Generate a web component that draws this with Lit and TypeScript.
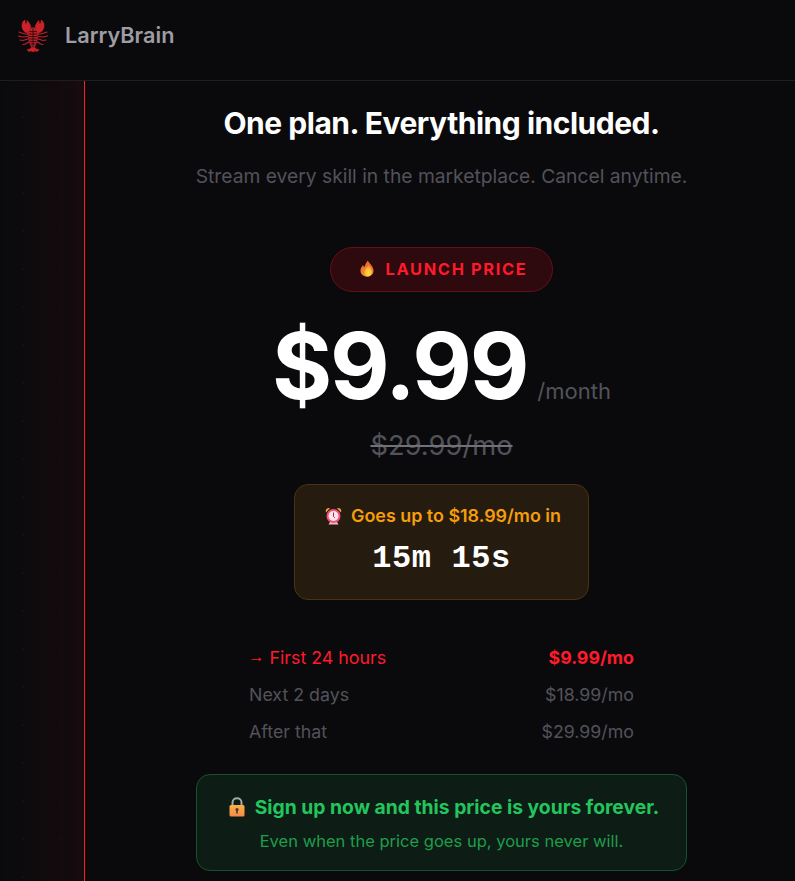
import { LitElement, html, css } from "lit";
import { customElement } from "lit/decorators.js";

@customElement("app-root")
export class AppRoot extends LitElement {
  static styles = css`
    :host { display: block; width: 795px; height: 881px; overflow: hidden; background: #0a0a0c; font-family: Inter, "Noto Sans", sans-serif; color: #fff; }
    .head { height: 80px; border-bottom: 1px solid #1e1e22; display: flex; align-items: center; padding-left: 17px; gap: 16px; }
    .logo { width: 32px; height: 34px; margin-top: -10px; flex: none; }
    .brand { font-size: 21.7px; font-weight: 600; color: #9d9da3; margin-top: -10px; }
    .body { display: flex; height: 800px; }
    .side { width: 84px; flex: none; border-right: 1px solid #ff1a2b; background-color: #0a0a0c; background-image: radial-gradient(circle, #111114 0.8px, transparent 1.2px), linear-gradient(90deg, rgba(255, 26, 43, 0) 0%, rgba(255, 26, 43, 0.02) 50%, rgba(255, 26, 43, 0.055) 100%); background-size: 38px 38px, 100% 100%; background-position: 4px 17px, 0 0; }
    .main { flex: 1; display: flex; flex-direction: column; align-items: center; padding-left: 3px; }
    h1 { margin: 22px 0 0; font-size: 30px; line-height: 40px; font-weight: 700; letter-spacing: -0.48px; color: #fff; }
    .sub { margin-top: 19px; font-size: 19.25px; line-height: 28px; color: #52525b; }
    .pill { margin-top: 57px; height: 45px; width: 223px; box-sizing: border-box; border: 1px solid #64101a; border-radius: 23px; background: #2e090e; display: flex; align-items: center; justify-content: center; gap: 12px; padding: 0 0 2px 4px; font-size: 16.4px; font-weight: 700; letter-spacing: 1.65px; color: #ff1a2b; }
    .price { display: flex; align-items: baseline; margin-top: 14px; height: 120px; gap: 10px; }
    .amount { font-size: 92px; line-height: 120px; font-weight: 700; letter-spacing: -2.2px; color: #fff; }
    .per { font-size: 22px; color: #52525b; }
    .old { font-size: 27.3px; line-height: 36px; margin-top: 2px; color: #52525b; text-decoration: line-through; text-decoration-color: #71717a; }
    .timer { margin-top: 20px; width: 295px; height: 116px; box-sizing: border-box; border: 1px solid #4a3312; border-radius: 14px; background: #261b0f; display: flex; flex-direction: column; align-items: center; padding: 19px 0 0 3px; }
    .t1 { font-size: 17.9px; line-height: 24px; font-weight: 600; color: #f59e0b; display: flex; gap: 9px; align-items: center; }
    .t2 { margin: 11px 0 0 -3px; font-family: "Liberation Mono", monospace; font-size: 32px; line-height: 40px; font-weight: 700; color: #fff; letter-spacing: 0.6px; }
    .tiers { margin-top: 46px; width: 385px; display: flex; flex-direction: column; gap: 13px; }
    .row { display: flex; justify-content: space-between; font-size: 17.8px; line-height: 24px; color: #52525b; }
    .row.on { color: #ff1a2b; }
    .row.on b { font-weight: 700; }
    .arrow { font-family: "Liberation Sans", sans-serif; font-size: 16.5px; display: inline-block; transform: translateY(-2px); margin-left: -1px; }
    .lock { margin-top: 30px; width: 491px; height: 97px; box-sizing: border-box; border: 1px solid #14532d; border-radius: 14px; background: #0d1c14; display: flex; flex-direction: column; align-items: center; padding-top: 19px; }
    .l1 { font-size: 19.3px; line-height: 26px; font-weight: 700; color: #22c55e; display: flex; gap: 9px; align-items: center; padding-left: 4px; }
    .l2 { margin-top: 10px; font-size: 16.55px; line-height: 22px; color: #1f9d4d; }
    .ico { flex: none; display: block; }
  `;

  render() {
    return html`
      <div class="head">
        <svg class="logo" viewBox="15 18 32 34" fill="none" stroke="#c2222a" stroke-linecap="round">
          <defs>
            <g id="half">
              <path d="M25.500 33 C21 32 19.500 28 20 24.500 C20.300 22 21.500 20.500 23 20 C22.800 22 23.300 23.500 24.300 24 C24.800 23 25 21.500 25 20.500 C27.500 22 28.500 26 28 29 C27.700 31 26.800 32.500 25.500 33Z" fill="#cc2129" stroke-width=".5"/>
              <path d="M27.500 24 L29.500 29.500 M25.500 33 L28 35" stroke-width="1.100"/>
              <path d="M27 34.500 L21 33.500 L17 32 M27 36.500 L20.500 37 L16.500 36 M27.300 38.500 L21 40.500 L18 40 M28 41 L23.500 44 L21 44.500" stroke-width="1.200"/>
              <path d="M31 47 C29 47 28.500 48 28 49 L25 49.500 L26.500 51.500 L29 51 L31 51.800Z" fill="#cc2129" stroke-width=".5"/>
            </g>
          </defs>
          <use href="#half"/>
          <use href="#half" transform="matrix(-1 0 0 1 62 0)"/>
          <path d="M31 28 C34.500 28 36 32 35.500 36.500 C35 41 33.500 47.500 31 47.500 C28.500 47.500 27 41 26.500 36.500 C26 32 27.500 28 31 28Z" fill="#b81f27" stroke-width=".8"/>
          <path d="M27.500 31.500 H34.500 M27 34 H35 M27 36.500 H35 M27.500 39 H34.500 M28 41.500 H34 M28.800 44 H33.200 M31 29 V47" stroke="#0a0a0c" stroke-width=".7"/>
        </svg>
        <span class="brand">LarryBrain</span>
      </div>
      <div class="body">
        <div class="side"></div>
        <div class="main">
          <h1>One plan. Everything included.</h1>
          <div class="sub">Stream every skill in the marketplace. Cancel anytime.</div>
          <div class="pill">
            <svg class="ico" width="14" height="17" viewBox="0 0 14 17">
              <defs>
                <linearGradient id="fl" x1="0" y1="0" x2="0" y2="1"><stop offset="0" stop-color="#e8662c"/><stop offset="1" stop-color="#f08a3a"/></linearGradient>
                <radialGradient id="fi" cx=".55" cy=".7" r=".6"><stop offset="0" stop-color="#ffe04a"/><stop offset=".7" stop-color="#ffb52e"/><stop offset="1" stop-color="#f98a2c"/></radialGradient>
              </defs>
              <path d="M8 0.500 C8.500 3 13.500 6 13.500 10.500 C13.500 14.500 10.500 16.500 7 16.500 C3 16.500 0.500 14 0.500 10.500 C0.500 8 2 6.500 3 5 C3.500 6 3.800 6.800 4.500 7 C5 4.500 6.500 2 8 0.500Z" fill="url(#fl)"/>
              <path d="M8.500 5 C9.500 7 12 9 12 11.500 C12 14.500 10 16.500 7.500 16.500 C5 16.500 4 14.500 4 12.500 C4 9.500 7 8 8.500 5Z" fill="url(#fi)"/>
            </svg>
            <span>LAUNCH PRICE</span>
          </div>
          <div class="price"><span class="amount">$9.99</span><span class="per">/month</span></div>
          <div class="old">$29.99/mo</div>
          <div class="timer">
            <div class="t1">
              <svg class="ico" width="17" height="18" viewBox="0 0 17 18">
                <path d="M1 5.500 C0 2.500 2 0.500 5 1 Z" fill="#f0b03c"/>
                <path d="M16 5.500 C17 2.500 15 0.500 12 1 Z" fill="#f0b03c"/>
                <path d="M5 15 L3.500 17.500 H13.500 L12 15 Z" fill="#f7b6cc"/>
                <circle cx="8.500" cy="9" r="7" fill="#f4527e"/>
                <circle cx="8.500" cy="9" r="5" fill="#fbe6ea"/>
                <path d="M8.500 5.500 V9.500 L9.800 10.800" stroke="#c2185b" stroke-width="1" fill="none"/>
              </svg>
              <span>Goes up to $18.99/mo in</span>
            </div>
            <div class="t2">15m 15s</div>
          </div>
          <div class="tiers">
            <div class="row on"><span><span class="arrow">→</span> First 24 hours</span><b>$9.99/mo</b></div>
            <div class="row"><span>Next 2 days</span><span>$18.99/mo</span></div>
            <div class="row"><span>After that</span><span>$29.99/mo</span></div>
          </div>
          <div class="lock">
            <div class="l1">
              <svg class="ico" width="18" height="20" viewBox="0 0 18 20">
                <defs><linearGradient id="lk" x1="0" y1="0" x2="0" y2="1"><stop offset="0" stop-color="#fbb33f"/><stop offset="1" stop-color="#f58a4b"/></linearGradient></defs>
                <path d="M4.500 9 V5.500 C4.500 3 6.500 1.200 9 1.200 C11.500 1.200 13.500 3 13.500 5.500 V9" fill="none" stroke="#a8a8b0" stroke-width="2"/>
                <rect x="1.500" y="8" width="15" height="11.500" rx="1.500" fill="url(#lk)"/>
                <circle cx="9" cy="12.500" r="1.600" fill="#4a3a3a"/>
                <rect x="8.200" y="12.500" width="1.600" height="4" fill="#4a3a3a"/>
              </svg>
              <span>Sign up now and this price is yours forever.</span>
            </div>
            <div class="l2">Even when the price goes up, yours never will.</div>
          </div>
        </div>
      </div>
    `;
  }
}
